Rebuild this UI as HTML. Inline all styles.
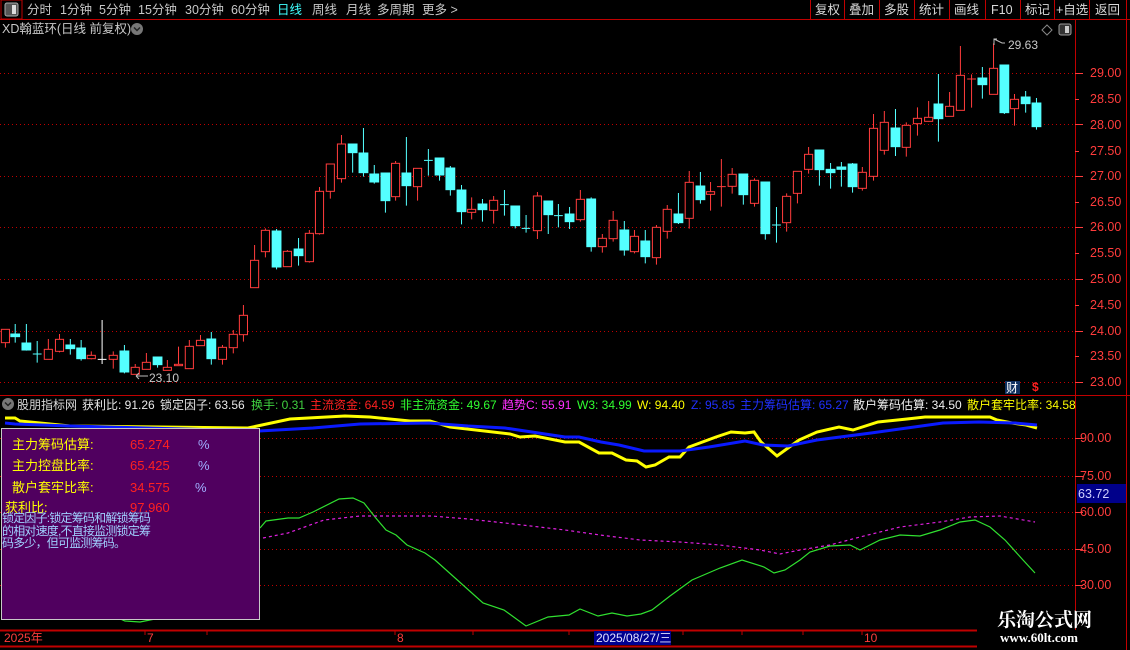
<!DOCTYPE html>
<html><head><meta charset="utf-8">
<style>
*{margin:0;padding:0;box-sizing:border-box}
body{width:1130px;height:650px;background:#000;overflow:hidden;position:relative;font-family:"Liberation Sans","Noto Sans CJK SC",sans-serif;font-size:12px;color:#c8c8c8}
.a{position:absolute;white-space:nowrap;line-height:14px}
.tb{top:3px;font-size:12.5px;color:#c8c8c8}
.rb{top:3px;font-size:12.5px;color:#d8d8d8}
.pl{position:absolute;left:1090px;color:#ff3c3c;font-size:12.5px;line-height:14px}
.ll{position:absolute;left:1080px;color:#ff3c3c;font-size:12.5px;line-height:14px}
.h{position:absolute;top:398px;font-size:12px;line-height:14px;white-space:nowrap}
</style></head><body>
<svg width="1130" height="650" style="position:absolute;left:0;top:0">
<rect x="1" y="0" width="21" height="19" fill="none" stroke="#c00000"/>
<rect x="5" y="3" width="13" height="13" rx="2" fill="#555" stroke="#aaa"/>
<rect x="12" y="5" width="4" height="9" fill="#ddd"/>
<line x1="0" y1="19.5" x2="1130" y2="19.5" stroke="#c00000"/>
<g stroke="#c00000">
<line x1="810.5" y1="0" x2="810.5" y2="19"/><line x1="844.5" y1="0" x2="844.5" y2="19"/><line x1="879.5" y1="0" x2="879.5" y2="19"/><line x1="914.5" y1="0" x2="914.5" y2="19"/><line x1="949.5" y1="0" x2="949.5" y2="19"/><line x1="985.5" y1="0" x2="985.5" y2="19"/><line x1="1020.5" y1="0" x2="1020.5" y2="19"/><line x1="1054.5" y1="0" x2="1054.5" y2="19"/><line x1="1089.5" y1="0" x2="1089.5" y2="19"/><line x1="1126.5" y1="0" x2="1126.5" y2="650"/>
<line x1="1075.5" y1="19" x2="1075.5" y2="630"/>
</g>
<circle cx="137" cy="29" r="6" fill="#777"/><path d="M134 27.5l3 3 3-3" stroke="#222" stroke-width="1.5" fill="none"/>
<path d="M1047 25l5 5-5 5-5-5z" fill="none" stroke="#888"/>
<rect x="1059" y="24" width="12" height="11" rx="2" fill="#333" stroke="#999"/><rect x="1065" y="26" width="4" height="7" fill="#ccc"/>
<g stroke="#c00000" stroke-dasharray="1,3">
<line x1="0" y1="73.5" x2="1075" y2="73.5"/><line x1="0" y1="124.5" x2="1075" y2="124.5"/><line x1="0" y1="176.5" x2="1075" y2="176.5"/><line x1="0" y1="227.5" x2="1075" y2="227.5"/><line x1="0" y1="279.5" x2="1075" y2="279.5"/><line x1="0" y1="331.5" x2="1075" y2="331.5"/><line x1="0" y1="382.5" x2="1075" y2="382.5"/>
<line x1="0" y1="438.5" x2="1075" y2="438.5"/><line x1="0" y1="476.5" x2="1075" y2="476.5"/><line x1="0" y1="512.5" x2="1075" y2="512.5"/><line x1="0" y1="549.5" x2="1075" y2="549.5"/><line x1="0" y1="585.5" x2="1075" y2="585.5"/>
</g>
<g stroke="#ff3c3c">
<line x1="1075" y1="73.5" x2="1083" y2="73.5"/><line x1="1075" y1="99.5" x2="1079" y2="99.5"/><line x1="1075" y1="124.5" x2="1083" y2="124.5"/><line x1="1075" y1="151.5" x2="1079" y2="151.5"/><line x1="1075" y1="176.5" x2="1083" y2="176.5"/><line x1="1075" y1="202.5" x2="1079" y2="202.5"/><line x1="1075" y1="227.5" x2="1083" y2="227.5"/><line x1="1075" y1="253.5" x2="1079" y2="253.5"/><line x1="1075" y1="279.5" x2="1083" y2="279.5"/><line x1="1075" y1="305.5" x2="1079" y2="305.5"/><line x1="1075" y1="331.5" x2="1083" y2="331.5"/><line x1="1075" y1="356.5" x2="1079" y2="356.5"/><line x1="1075" y1="382.5" x2="1083" y2="382.5"/>
<line x1="1075" y1="438.5" x2="1083" y2="438.5"/><line x1="1075" y1="476.5" x2="1083" y2="476.5"/><line x1="1075" y1="512.5" x2="1083" y2="512.5"/><line x1="1075" y1="549.5" x2="1083" y2="549.5"/><line x1="1075" y1="585.5" x2="1083" y2="585.5"/>
</g>
<line x1="0" y1="395.5" x2="1130" y2="395.5" stroke="#c00000"/>
<g transform="translate(0,120) scale(0.3381,0.33333)">
<g stroke="#ff3c3c" fill="#000" stroke-width="3">
<path d="M16 628V683M143 657V718M176 642V697M270 694V718M335 694V746M400 732V763M433 699V748M495 720V751M528 680V737M560 660V746M593 645V677M658 675V734M690 630V700M720 555V665M753 375V503M785 325V412M850 390V440M915 330V428M945 201V344M977 132V236M1010 45V188M1170 123V242M1235 145V242M1395 232V298M1460 228V311"/>
<rect x="4" y="628" width="24" height="40"/><rect x="131" y="688" width="24" height="30"/><rect x="164" y="658" width="24" height="36"/><rect x="258" y="706" width="24" height="10"/><rect x="323" y="706" width="24" height="12"/><rect x="388" y="742" width="24" height="21"/><rect x="421" y="727" width="24" height="21"/><rect x="483" y="742" width="24" height="9"/><rect x="516" y="733" width="24" height="4"/><rect x="548" y="679" width="24" height="67"/><rect x="581" y="661" width="24" height="16"/><rect x="646" y="682" width="24" height="36"/><rect x="678" y="643" width="24" height="40"/><rect x="708" y="586" width="24" height="58"/><rect x="741" y="421" width="24" height="82"/><rect x="773" y="331" width="24" height="64"/><rect x="838" y="394" width="24" height="46"/><rect x="903" y="340" width="24" height="85"/><rect x="933" y="214" width="24" height="127"/><rect x="965" y="132" width="24" height="82"/><rect x="998" y="72" width="24" height="104"/><rect x="1158" y="130" width="24" height="100"/><rect x="1223" y="145" width="24" height="55"/><rect x="1383" y="268" width="24" height="9"/><rect x="1448" y="241" width="24" height="30"/>
</g>
<g stroke="#54ffff" fill="#54ffff" stroke-width="3">
<path d="M45 612V668M78 612V692M110 663V728M208 657V704M240 660V722M368 675V760M466 711V743M625 636V734M818 327V448M883 354V437M1043 72V158M1075 24V170M1107 135V191M1140 159V278M1202 51V257M1267 87V167M1300 114V182M1332 138V227M1365 195V313M1427 237V305M1492 210V287M1524 258V325M1556 285V338 M97 702H123M1254 121H1280M1479 254H1505M1543 325H1568"/>
<rect x="32" y="642" width="26" height="8"/><rect x="65" y="669" width="26" height="21"/><rect x="195" y="675" width="26" height="11"/><rect x="227" y="684" width="26" height="32"/><rect x="355" y="693" width="26" height="63"/><rect x="453" y="711" width="26" height="23"/><rect x="612" y="657" width="26" height="59"/><rect x="805" y="333" width="26" height="108"/><rect x="870" y="387" width="26" height="20"/><rect x="1030" y="72" width="26" height="26"/><rect x="1062" y="99" width="26" height="59"/><rect x="1094" y="162" width="26" height="24"/><rect x="1127" y="159" width="26" height="83"/><rect x="1189" y="159" width="26" height="38"/><rect x="1287" y="114" width="26" height="51"/><rect x="1319" y="144" width="26" height="65"/><rect x="1352" y="210" width="26" height="65"/><rect x="1414" y="252" width="26" height="17"/><rect x="1511" y="258" width="26" height="59"/>
</g>
<path d="M302 600V732M289 718H315" stroke="#fff" stroke-width="3"/>
</g>
<g transform="translate(530,30) scale(0.3381,0.33333)">
<g stroke="#ff3c3c" fill="#000" stroke-width="3">
<path d="M22 486V627M149 480V575M214 612V668M246 543V635M309 600V670M374 585V704M406 525V626M471 423V596M534 456V542M566 387V530M598 414V491M664 445V530M759 490V605M791 424V520M824 351V431M983 411V482M1016 252V452M1048 243V374M1113 277V380M1146 232V317M1179 213V274M1241 186V259M1273 48V241M1306 133V233M1371 40V193M1433 192V287 M553 470H579M1293 147H1319"/>
<rect x="10" y="498" width="24" height="104"/><rect x="137" y="508" width="24" height="61"/><rect x="202" y="625" width="24" height="25"/><rect x="234" y="571" width="24" height="55"/><rect x="297" y="619" width="24" height="46"/><rect x="362" y="592" width="24" height="91"/><rect x="394" y="538" width="24" height="66"/><rect x="459" y="457" width="24" height="108"/><rect x="522" y="485" width="24" height="8"/><rect x="586" y="433" width="24" height="36"/><rect x="652" y="451" width="24" height="69"/><rect x="747" y="499" width="24" height="79"/><rect x="779" y="424" width="24" height="66"/><rect x="812" y="373" width="24" height="45"/><rect x="971" y="427" width="24" height="48"/><rect x="1004" y="295" width="24" height="144"/><rect x="1036" y="277" width="24" height="84"/><rect x="1101" y="286" width="24" height="66"/><rect x="1134" y="265" width="24" height="16"/><rect x="1167" y="262" width="24" height="12"/><rect x="1229" y="229" width="24" height="30"/><rect x="1261" y="136" width="24" height="105"/><rect x="1359" y="115" width="24" height="78"/><rect x="1421" y="208" width="24" height="28"/>
</g>
<g stroke="#54ffff" fill="#54ffff" stroke-width="3">
<path d="M54 513V612M84 522V592M117 531V597M181 502V665M279 573V677M341 600V700M439 489V582M504 426V521M631 432V524M696 456V629M729 531V638M856 360V467M889 399V476M921 396V470M954 399V488M1081 237V378M1208 132V335M1338 111V206M1403 105V252M1466 183V248M1498 204V299 M71 557H97M716 585H742"/>
<rect x="41" y="513" width="26" height="41"/><rect x="104" y="552" width="26" height="23"/><rect x="168" y="507" width="26" height="143"/><rect x="266" y="600" width="26" height="60"/><rect x="328" y="633" width="26" height="47"/><rect x="426" y="552" width="26" height="26"/><rect x="491" y="468" width="26" height="41"/><rect x="618" y="432" width="26" height="62"/><rect x="683" y="456" width="26" height="155"/><rect x="843" y="360" width="26" height="59"/><rect x="876" y="418" width="26" height="10"/><rect x="908" y="411" width="26" height="7"/><rect x="941" y="402" width="26" height="68"/><rect x="1068" y="294" width="26" height="56"/><rect x="1195" y="222" width="26" height="44"/><rect x="1325" y="144" width="26" height="20"/><rect x="1390" y="105" width="26" height="143"/><rect x="1453" y="201" width="26" height="20"/><rect x="1485" y="219" width="26" height="71"/>
</g>
</g>
<path d="M994 45V39l3 0 M994 39l8 4h3" stroke="#bbb" fill="none"/>
<path d="M136 376h12M136 376l3-3M136 376l3 3" stroke="#bbb" fill="none"/>
<polyline fill="none" stroke="#ffff00" stroke-width="3" points="5,418 15,418 20,421 70,426 248,428 290,419 345,416 370,417 410,421 430,421 450,427 510,434 520,437 535,436 565,442 579,442 599,453 612,453 626,460 637,461 646,467 655,465 669,457 680,457 689,447 716,437 731,432 745,433 754,432 761,442 777,456 788,448 799,440 817,432 839,427 853,430 878,422 907,419 925,417 951,417 990,417 997,420 1012,423 1026,425 1037,428"/>
<polyline fill="none" stroke="#0a1aff" stroke-width="3" points="5,423 15,424 70,426 259,431 313,428 360,424 429,423 468,426 505,428 565,437 579,437 601,442 619,445 644,451 680,451 709,447 745,441 763,445 788,446 817,440 871,433 907,428 943,423 979,422 1015,423 1037,425"/>
<polyline fill="none" stroke="#30e030" stroke-width="1.2" points="260,528 266,521 288,518 299,518 313,512 339,499 353,498 364,503 375,517 386,530 396,535 407,545 425,553 435,560 483,603 504,610 526,626 548,617 569,615 580,609 598,616 612,613 627,616 641,614 652,610 670,596 692,580 720,568 742,560 764,567 774,573 785,570 800,560 810,552 830,546 850,545 860,550 880,540 900,535 920,536 940,530 960,522 975,520 990,527 1005,540 1023,560 1035,573"/>
<polyline fill="none" stroke="#e020e0" stroke-width="1.2" stroke-dasharray="3,3" points="263,538 288,533 324,520 360,516 432,516 468,519 505,523 565,530 600,535 640,540 680,542 720,545 760,550 780,554 800,550 830,545 860,537 900,527 940,522 970,517 1000,516 1035,522"/>
<polyline fill="none" stroke="#30e030" stroke-width="1.2" points="118,618 125,621 140,622 155,619"/>
<rect x="1.5" y="428.5" width="258" height="191" fill="#50005f" stroke="#c8c8c8"/>
<line x1="0" y1="630.5" x2="977" y2="630.5" stroke="#c00000" stroke-width="2"/>
<line x1="0" y1="646.5" x2="977" y2="646.5" stroke="#c00000" stroke-width="2"/>
<g stroke="#c00000"><path d="M145 630v5M207 630v5M395 630v5M473 630v5M569 630v5M683 630v5M742 630v5M803 630v5M862 630v5"/></g>
<rect x="594" y="631" width="77" height="14" fill="#000090"/>
<circle cx="8" cy="404" r="6" fill="#777"/><path d="M5 402.5l3 3 3-3" stroke="#222" stroke-width="1.5" fill="none"/>
<rect x="1005" y="381" width="15" height="13" fill="#103060"/>
<rect x="1077" y="484" width="49" height="19" fill="#00008a"/>
</svg>
<div class="a tb" style="left:27px">分时</div>
<div class="a tb" style="left:60px">1分钟</div>
<div class="a tb" style="left:99px">5分钟</div>
<div class="a tb" style="left:138px">15分钟</div>
<div class="a tb" style="left:185px">30分钟</div>
<div class="a tb" style="left:231px">60分钟</div>
<div class="a tb" style="left:277px;color:#40ffff">日线</div>
<div class="a tb" style="left:312px">周线</div>
<div class="a tb" style="left:346px">月线</div>
<div class="a tb" style="left:377px">多周期</div>
<div class="a tb" style="left:422px">更多 &gt;</div>
<div class="a rb" style="left:815px">复权</div>
<div class="a rb" style="left:849px">叠加</div>
<div class="a rb" style="left:884px">多股</div>
<div class="a rb" style="left:919px">统计</div>
<div class="a rb" style="left:954px">画线</div>
<div class="a rb" style="left:991px">F10</div>
<div class="a rb" style="left:1025px">标记</div>
<div class="a rb" style="left:1056px">+自选</div>
<div class="a rb" style="left:1095px">返回</div>
<div class="a" style="left:2px;top:22px;font-size:12.5px;color:#c8c8c8">XD翰蓝环(日线 前复权)</div>
<div class="a" style="left:1008px;top:38px;font-size:12px;color:#c8c8c8">29.63</div>
<div class="a" style="left:149px;top:371px;font-size:12px;color:#c8c8c8">23.10</div>
<div class="a" style="left:1006px;top:381px;font-size:12px;color:#fff">财</div>
<div class="a" style="left:1032px;top:380px;font-size:12px;color:#ff2020;font-weight:bold">$</div>
<div class="pl" style="top:66px">29.00</div><div class="pl" style="top:92px">28.50</div><div class="pl" style="top:118px">28.00</div><div class="pl" style="top:144px">27.50</div><div class="pl" style="top:169px">27.00</div><div class="pl" style="top:195px">26.50</div><div class="pl" style="top:220px">26.00</div><div class="pl" style="top:246px">25.50</div><div class="pl" style="top:272px">25.00</div><div class="pl" style="top:298px">24.50</div><div class="pl" style="top:324px">24.00</div><div class="pl" style="top:349px">23.50</div><div class="pl" style="top:375px">23.00</div>
<div class="ll" style="top:431px">90.00</div><div class="ll" style="top:469px">75.00</div><div class="ll" style="top:505px">60.00</div><div class="ll" style="top:542px">45.00</div><div class="ll" style="top:578px">30.00</div>
<div class="a" style="left:1078px;top:487px;font-size:12.5px;color:#d0d0ff">63.72</div>
<div class="h" style="left:17px;color:#d8d8d8">股朋指标网</div>
<div class="h" style="left:82px;color:#e8e8e8">获利比: 91.26</div>
<div class="h" style="left:160px;color:#e8e8e8">锁定因子: 63.56</div>
<div class="h" style="left:251px;color:#40d040">换手: 0.31</div>
<div class="h" style="left:310px;color:#ff2020">主流资金: 64.59</div>
<div class="h" style="left:400px;color:#30ff30">非主流资金: 49.67</div>
<div class="h" style="left:502px;color:#ff30ff">趋势C: 55.91</div>
<div class="h" style="left:577px;color:#30ff30">W3: 34.99</div>
<div class="h" style="left:637px;color:#ffff00">W: 94.40</div>
<div class="h" style="left:691px;color:#2030ff">Z: 95.85</div>
<div class="h" style="left:740px;color:#2030ff">主力筹码估算: 65.27</div>
<div class="h" style="left:853px;color:#f0f0f0">散户筹码估算: 34.50</div>
<div class="h" style="left:967px;color:#ffff00">散户套牢比率: 34.58</div>
<div class="a" style="left:12px;top:438px;font-size:13px;color:#ffff00">主力筹码估算:</div>
<div class="a" style="left:130px;top:438px;font-size:13px;color:#ff2020">65.274</div>
<div class="a" style="left:198px;top:438px;font-size:13px;color:#a0b0ff">%</div>
<div class="a" style="left:12px;top:459px;font-size:13px;color:#ffff00">主力控盘比率:</div>
<div class="a" style="left:130px;top:459px;font-size:13px;color:#ff2020">65.425</div>
<div class="a" style="left:198px;top:459px;font-size:13px;color:#a0b0ff">%</div>
<div class="a" style="left:12px;top:481px;font-size:13px;color:#ffff00">散户套牢比率:</div>
<div class="a" style="left:130px;top:481px;font-size:13px;color:#ff2020">34.575</div>
<div class="a" style="left:195px;top:481px;font-size:13px;color:#a0b0ff">%</div>
<div class="a" style="left:5px;top:501px;font-size:13px;color:#ffff00">获利比:</div>
<div class="a" style="left:130px;top:501px;font-size:13px;color:#ff2020">97.960</div>
<div class="a" style="left:2px;top:512px;font-size:12px;letter-spacing:-0.8px;line-height:12.5px;color:#a0d0ff">锁定因子:锁定筹码和解锁筹码<br>的相对速度,不直接监测锁定筹<br>码多少，但可监测筹码。</div>
<div class="a" style="left:4px;top:631px;font-size:12px;color:#ff3c3c">2025年</div>
<div class="a" style="left:147px;top:631px;font-size:12px;color:#ff3c3c">7</div>
<div class="a" style="left:397px;top:631px;font-size:12px;color:#ff3c3c">8</div>
<div class="a" style="left:596px;top:631px;font-size:12px;color:#e0e0ff">2025/08/27/三</div>
<div class="a" style="left:864px;top:631px;font-size:12px;color:#ff3c3c">10</div>
<div class="a" style="left:997px;top:608px;font-size:19px;line-height:22px;font-weight:bold;color:#fff;font-family:'Noto Serif CJK SC','Noto Sans CJK SC',serif">乐淘公式网</div>
<div class="a" style="left:1000px;top:631px;font-size:13px;font-weight:bold;color:#fff;font-family:'Liberation Serif',serif">www.60lt.com</div>
</body></html>
